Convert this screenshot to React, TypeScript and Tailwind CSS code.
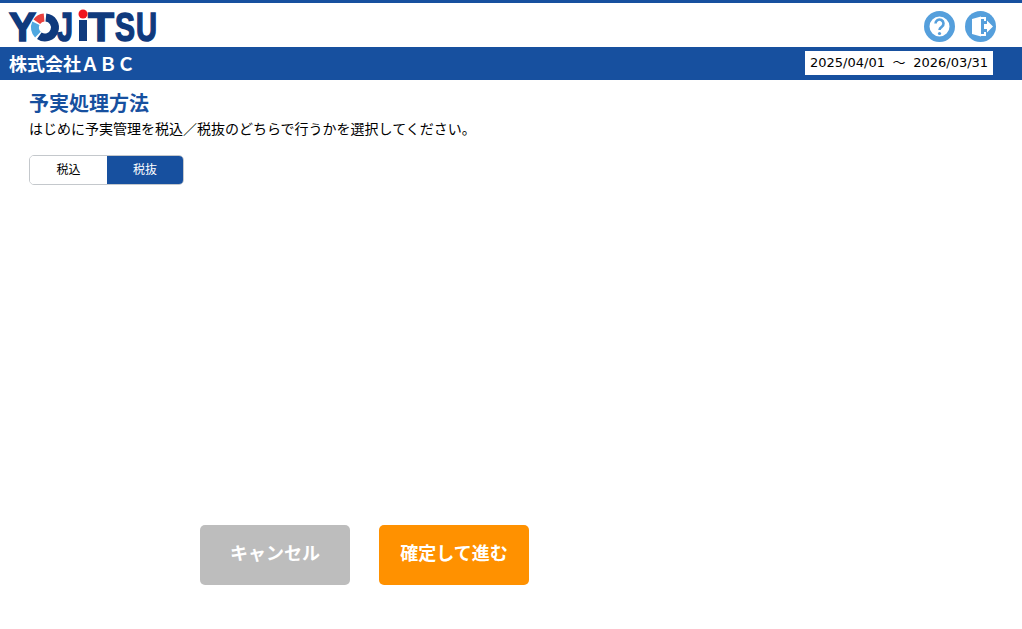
const jp = 'font-["Liberation_Sans","Noto_Sans_CJK_JP",sans-serif]';

function Logo() {
  return (
    <svg width="150" height="44" viewBox="9 3 150 44" className="block overflow-visible">
      <g
        fill="#0f3a7d"
        stroke="#0f3a7d"
        strokeWidth="1.5"
        fontFamily="'Liberation Sans', sans-serif"
        fontWeight="700"
        fontSize="40"
      >
        <text x="9" y="41" textLength="27" lengthAdjust="spacingAndGlyphs">Y</text>
        <text x="57" y="41" textLength="16" lengthAdjust="spacingAndGlyphs">J</text>
        <text x="88" y="41" textLength="26" lengthAdjust="spacingAndGlyphs">T</text>
        <text x="115" y="41" textLength="20" lengthAdjust="spacingAndGlyphs">S</text>
        <text x="136" y="41" textLength="21" lengthAdjust="spacingAndGlyphs">U</text>
      </g>
      <g fill="none" strokeWidth="8">
        <path d="M45.9 17.5A10 10 0 1 1 39.3 35.7" stroke="#0f3a7d" />
        <path d="M37.9 34.6A10 10 0 0 1 35.9 23.3" stroke="#4fa8e0" />
        <path d="M36.8 21.8A10 10 0 0 1 44.1 17.5" stroke="#e8423f" />
      </g>
      <rect x="79" y="20" width="8" height="21" fill="#0f3a7d" />
      <circle cx="83" cy="14" r="4.5" fill="#f0141e" />
    </svg>
  );
}

function HelpIcon() {
  return (
    <svg width="31" height="31" viewBox="0 0 31 31" className="block">
      <circle cx="15.5" cy="15.5" r="12.75" fill="#fff" stroke="#559fdc" strokeWidth="5.5" />
      <path d="M11.5 12.5a4 4 0 1 1 6.3 3.3c-1.5 1-2.3 1.5-2.3 3.2" fill="none" stroke="#559fdc" strokeWidth="2.6" />
      <circle cx="15.5" cy="22.5" r="1.6" fill="#559fdc" />
    </svg>
  );
}

function ExitIcon() {
  return (
    <svg width="31" height="31" viewBox="0 0 31 31" className="block">
      <circle cx="15.5" cy="15.5" r="15.5" fill="#559fdc" />
      <path d="M7 8l9-2.5v20L7 23z" fill="#fff" />
      <path d="M16 6h5v4h-2V8h-3zM16 25h5v-4h-2v2h-3z" fill="#fff" />
      <path d="M19 13h3v-3.5l6 6-6 6V18h-3z" fill="#fff" />
    </svg>
  );
}

export default function App() {
  return (
    <div className={`relative flex h-[629px] w-[1022px] flex-col overflow-hidden bg-white ${jp}`}>
      <div className="h-[3px] bg-[#17509f]" />
      <header className="flex h-[44px] items-center justify-between pl-[9px] pr-[26px]">
        <Logo />
        <div className="flex items-center gap-[10px] pt-[3px]">
          <HelpIcon />
          <ExitIcon />
        </div>
      </header>
      <div className="flex h-[33px] items-center justify-between bg-[#17509f] pl-[9px] pr-[29px]">
        <span className="mt-[2px] text-[18px] font-bold leading-none text-white">株式会社ＡＢＣ</span>
        <span className='mb-[2px] flex h-[24px] w-[188px] items-center bg-white pl-[5px] font-["DejaVu_Sans","Noto_Sans_CJK_JP",sans-serif] text-[13px] text-black [word-spacing:3.5px]'>
          2025/04/01 ～ 2026/03/31
        </span>
      </div>
      <main className="flex flex-1 flex-col pl-[29px]">
        <h1 className="mt-[12px] text-[20px] font-bold leading-[24px] text-[#17509f]">予実処理方法</h1>
        <p className="mt-[3px] text-[14px] leading-[20px] text-black">
          はじめに予実管理を税込／税抜のどちらで行うかを選択してください。
        </p>
        <div className="mt-[16px] flex h-[30px] w-[155px] overflow-hidden rounded-[5px] border border-[#c4c8cc] text-[12px]">
          <button className="flex-1 bg-white text-black">税込</button>
          <button className="w-[76px] bg-[#17509f] text-white">税抜</button>
        </div>
        <div className="mt-[340px] ml-[171px] flex gap-[29px]">
          <button className="h-[60px] w-[150px] rounded-[5px] bg-[#bdbdbd] pb-[2px] text-[18px] font-bold text-white">キャンセル</button>
          <button className="h-[60px] w-[150px] rounded-[5px] bg-[#ff9100] pb-[2px] text-[18px] font-bold text-white">確定して進む</button>
        </div>
      </main>
    </div>
  );
}
